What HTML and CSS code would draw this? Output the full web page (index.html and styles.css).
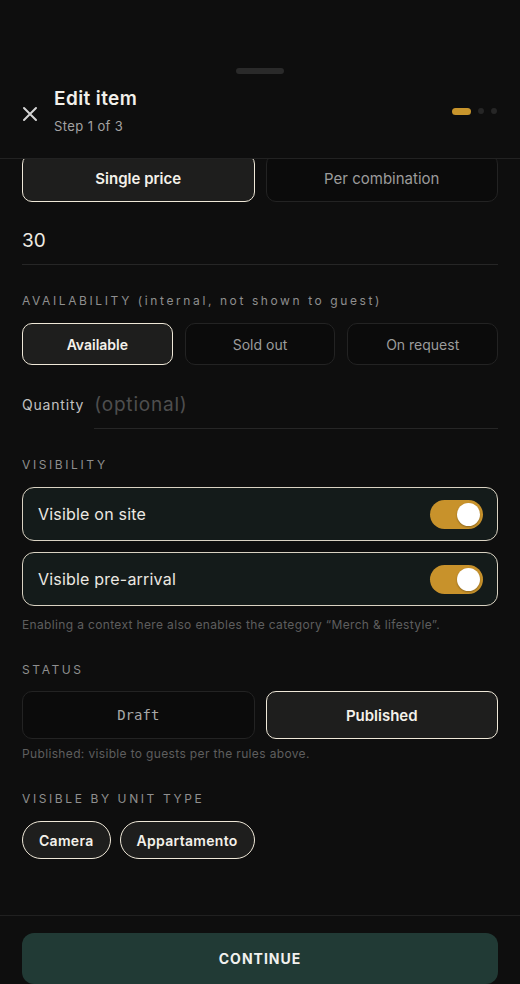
FILE: index.html
```html
<!DOCTYPE html>
<html>
<head>
  <title>Edit item</title>
  <meta charset="utf-8">
  <link rel="stylesheet" href="styles.css">
</head>
<body>
  <!-- Bottom sheet -->
  <div class="sheet">
    <div class="handle-area">
      <div class="handle"></div>
    </div>

    <!-- Header with close button and step dots -->
    <div class="header">
      <button class="close-btn" aria-label="Close">
        <svg width="16" height="16" viewBox="0 0 16 16">
          <path d="M2 2 L14 14 M14 2 L2 14" stroke="#d4d4d4" stroke-width="2" stroke-linecap="round" fill="none"/>
        </svg>
      </button>
      <div class="title-block">
        <div class="title">Edit item</div>
        <div class="subtitle">Step 1 of 3</div>
      </div>
      <div class="steps">
        <span class="step active"></span>
        <span class="step"></span>
        <span class="step"></span>
      </div>
    </div>

    <div class="scroll">
      <div class="content">
        <div class="segmented two first-row">
          <button class="seg selected">Single price</button>
          <button class="seg">Per combination</button>
        </div>

        <div class="field price-field">30</div>

        <div class="section-label">AVAILABILITY (internal, not shown to guest)</div>
        <div class="segmented three small">
          <button class="seg selected">Available</button>
          <button class="seg">Sold out</button>
          <button class="seg">On request</button>
        </div>

        <div class="quantity-row">
          <span class="quantity-label">Quantity</span>
          <div class="field quantity-field">(optional)</div>
        </div>

        <div class="section-label">VISIBILITY</div>
        <div class="toggle-list">
          <div class="toggle-card">
            <span>Visible on site</span>
            <span class="switch on"><span class="knob"></span></span>
          </div>
          <div class="toggle-card">
            <span>Visible pre-arrival</span>
            <span class="switch on"><span class="knob"></span></span>
          </div>
        </div>
        <div class="hint">Enabling a context here also enables the category “Merch &amp; lifestyle”.</div>

        <div class="section-label">STATUS</div>
        <div class="segmented two status">
          <button class="seg mono">Draft</button>
          <button class="seg selected">Published</button>
        </div>
        <div class="hint hint-tight">Published: visible to guests per the rules above.</div>

        <div class="section-label">VISIBLE BY UNIT TYPE</div>
        <div class="chips">
          <button class="chip">Camera</button>
          <button class="chip">Appartamento</button>
        </div>
      </div>
    </div>

    <!-- Footer action -->
    <div class="footer">
      <button class="continue-btn">CONTINUE</button>
    </div>
  </div>
</body>
</html>
```
FILE: styles.css
```css
body {
  margin: 0;
  background-color: #0e0e0e;
  font-family: "Inter", "Noto Sans", sans-serif;
  color: #f0ede6;
}

.sheet {
  height: 984px;
  display: flex;
  flex-direction: column;
  overflow: hidden;
}

.handle-area {
  padding-top: 68px;
  display: flex;
  justify-content: center;
}

.handle {
  width: 48px;
  height: 6px;
  border-radius: 3px;
  background-color: #2a2a2a;
}

/* Header */
.header {
  display: flex;
  align-items: center;
  padding: 13px 23px 23px 22px;
  border-bottom: 1px solid #222222;
}

.close-btn {
  width: 16px;
  height: 16px;
  padding: 0;
  border: none;
  background: transparent;
  margin-top: 6px;
  display: flex;
}

.title-block {
  margin-left: 16px;
  flex: 1;
}

.title {
  font-size: 19px;
  font-weight: 600;
  line-height: 24px;
  letter-spacing: 0.4px;
  color: #f2f0ea;
}

.subtitle {
  margin-top: 6px;
  font-size: 13px;
  line-height: 18px;
  letter-spacing: 0.4px;
  color: #a3a3a3;
}

.steps {
  display: flex;
  align-items: center;
  gap: 7px;
}

.step {
  width: 6px;
  height: 6px;
  border-radius: 3px;
  background-color: #262626;
}

.step.active {
  width: 19px;
  height: 7px;
  border-radius: 4px;
  background-color: #c8952c;
}

/* Scroll area */
.scroll {
  flex: 1;
  overflow: hidden;
}

.content {
  padding: 0 22px;
}

.segmented {
  display: flex;
  gap: 11px;
}

.segmented.three {
  gap: 12px;
}

.first-row {
  margin-top: -5px;
}

.seg {
  flex: 1;
  height: 48px;
  border: 1px solid #232323;
  border-radius: 10px;
  background-color: #0b0b0b;
  color: #9c9c9c;
  font-family: inherit;
  font-size: 15px;
  font-weight: 400;
}

.seg.selected {
  border: 1.5px solid #efe8d8;
  background-color: #1e1e1d;
  color: #f4f1ea;
  font-weight: 600;
}

.small .seg {
  height: 42px;
  font-size: 14px;
}

.seg.mono {
  font-family: "DejaVu Sans Mono", "Liberation Mono", monospace;
  font-size: 14px;
  color: #a8a8a8;
}

.field {
  height: 48px;
  display: flex;
  align-items: center;
  border-bottom: 1px solid #262626;
}

.price-field {
  margin-top: 14px;
  font-size: 19px;
  color: #eeeae2;
}

.section-label {
  margin-top: 28px;
  font-size: 12px;
  line-height: 16px;
  letter-spacing: 2.6px;
  color: #8f8f8f;
}

.section-label + .segmented,
.section-label + .toggle-list,
.section-label + .chips {
  margin-top: 14px;
}

.quantity-row {
  margin-top: 15px;
  display: flex;
  align-items: center;
  gap: 10px;
}

.quantity-label {
  font-size: 14px;
  letter-spacing: 0.8px;
  color: #c2c2c2;
}

.quantity-field {
  flex: 1;
  font-size: 19px;
  letter-spacing: 0.8px;
  color: #4e4e4e;
}

/* Toggle cards */
.toggle-list {
  display: flex;
  flex-direction: column;
  gap: 11px;
}

.toggle-card {
  height: 52px;
  display: flex;
  align-items: center;
  justify-content: space-between;
  padding: 0 14px 0 15px;
  border: 1.5px solid #d9d2c2;
  border-radius: 12px;
  background-color: #141b1a;
  font-size: 16px;
  letter-spacing: 0.2px;
  color: #ece9e2;
}

.switch {
  width: 53px;
  height: 29px;
  border-radius: 15px;
  background-color: #c8922b;
  display: flex;
  align-items: center;
  justify-content: flex-end;
  padding: 0 3px;
  box-sizing: border-box;
}

.knob {
  width: 23px;
  height: 23px;
  border-radius: 50%;
  background-color: #ffffff;
  box-shadow: 0 1px 2px rgba(0, 0, 0, 0.3);
}

.hint {
  margin-top: 11px;
  font-size: 12px;
  line-height: 16px;
  letter-spacing: 0.35px;
  color: #5e5e5e;
}

.hint-tight {
  margin-top: 7px;
}

.hint + .section-label {
  margin-top: 29px;
}

.status {
  margin-top: 13px !important;
}

/* Unit type chips */
.chips {
  display: flex;
  gap: 9px;
}

.chip {
  height: 38px;
  padding: 0 16px;
  border: 1.5px solid #efe8d8;
  border-radius: 19px;
  background-color: #1e1e1d;
  color: #f4f1ea;
  font-family: inherit;
  font-size: 14px;
  font-weight: 600;
  letter-spacing: 0.3px;
}

/* Footer */
.footer {
  border-top: 1px solid #202020;
  padding: 17px 22px 0;
}

.continue-btn {
  width: 100%;
  height: 51px;
  border: none;
  border-radius: 12px;
  background-color: #213a35;
  color: #f1f1ee;
  font-family: inherit;
  font-size: 14px;
  font-weight: 700;
  letter-spacing: 1px;
}
```
